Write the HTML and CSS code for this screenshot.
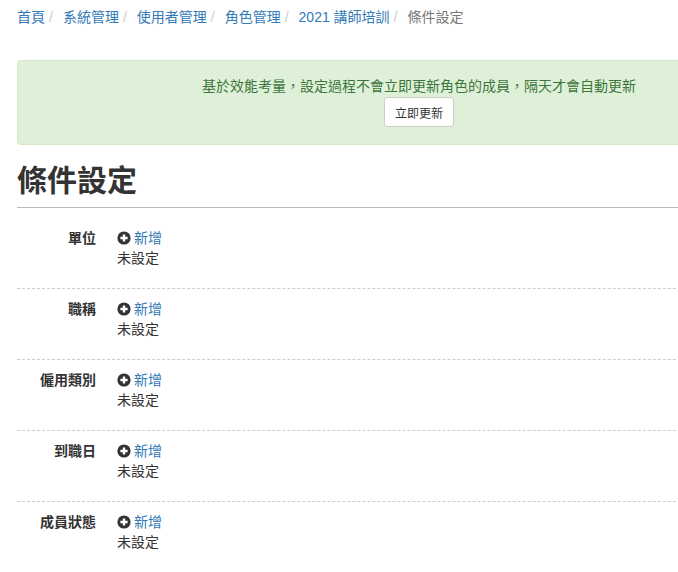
FILE: index.html
```html
<!DOCTYPE html>
<html lang="zh-Hant">
<head>
    <meta charset="UTF-8">
    <title>條件設定</title>
    <link rel="stylesheet" href="styles.css">
</head>
<body>
    <div class="page">
        <ol class="breadcrumb">
            <li><a href="#">首頁</a></li>
            <li><a href="#">系統管理</a></li>
            <li><a href="#">使用者管理</a></li>
            <li><a href="#">角色管理</a></li>
            <li><a href="#">2021 講師培訓</a></li>
            <li class="active">條件設定</li>
        </ol>

        <div class="alert-success">
            <p>基於效能考量，設定過程不會立即更新角色的成員，隔天才會自動更新</p>
            <button type="button" class="btn-sm">立即更新</button>
        </div>

        <h1 class="page-header">條件設定</h1>

        <div class="cond-row">
            <div class="cond-label">單位</div>
            <div class="cond-value">
                <a href="#" class="add-link"><svg width="14" height="14" viewBox="0 0 14 14"><circle cx="7" cy="7" r="6.6" fill="#333"/><path d="M7 3.4v7.2M3.4 7h7.2" stroke="#fff" stroke-width="2.4"/></svg>新增</a>
                <div>未設定</div>
            </div>
        </div>
        <div class="cond-row">
            <div class="cond-label">職稱</div>
            <div class="cond-value">
                <a href="#" class="add-link"><svg width="14" height="14" viewBox="0 0 14 14"><circle cx="7" cy="7" r="6.6" fill="#333"/><path d="M7 3.4v7.2M3.4 7h7.2" stroke="#fff" stroke-width="2.4"/></svg>新增</a>
                <div>未設定</div>
            </div>
        </div>
        <div class="cond-row">
            <div class="cond-label">僱用類別</div>
            <div class="cond-value">
                <a href="#" class="add-link"><svg width="14" height="14" viewBox="0 0 14 14"><circle cx="7" cy="7" r="6.6" fill="#333"/><path d="M7 3.4v7.2M3.4 7h7.2" stroke="#fff" stroke-width="2.4"/></svg>新增</a>
                <div>未設定</div>
            </div>
        </div>
        <div class="cond-row">
            <div class="cond-label">到職日</div>
            <div class="cond-value">
                <a href="#" class="add-link"><svg width="14" height="14" viewBox="0 0 14 14"><circle cx="7" cy="7" r="6.6" fill="#333"/><path d="M7 3.4v7.2M3.4 7h7.2" stroke="#fff" stroke-width="2.4"/></svg>新增</a>
                <div>未設定</div>
            </div>
        </div>
        <div class="cond-row">
            <div class="cond-label">成員狀態</div>
            <div class="cond-value">
                <a href="#" class="add-link"><svg width="14" height="14" viewBox="0 0 14 14"><circle cx="7" cy="7" r="6.6" fill="#333"/><path d="M7 3.4v7.2M3.4 7h7.2" stroke="#fff" stroke-width="2.4"/></svg>新增</a>
                <div>未設定</div>
            </div>
        </div>
    </div>
</body>
</html>
```

FILE: styles.css
```css
* { margin: 0; padding: 0; box-sizing: border-box; }

html, body { overflow: hidden; }

body { font-family: "Liberation Sans", "Noto Sans CJK TC", sans-serif; font-size: 14px; line-height: 20px; color: #333; background: #fff; }

a { color: #337ab7; text-decoration: none; }

.page { width: 804px; padding: 7px 0 0 17px; box-sizing: content-box; }

.breadcrumb { list-style: none; display: flex; }

.breadcrumb li + li::before { content: "/"; color: #ccc; padding: 0 10px 0 4px; }

.breadcrumb .active { color: #777; }

.alert-success { margin-top: 33px; padding: 15px 15px 17px; background: #dff0d8; border: 1px solid #d6e9c6; border-radius: 4px; color: #3c763d; text-align: center; }

.btn-sm { margin-top: 1px; height: 30px; padding: 0 10px; font-family: inherit; font-size: 12px; color: #333; background: #fff; border: 1px solid #ccc; border-radius: 3px; cursor: pointer; }

.page-header { margin-top: 19px; padding-bottom: 10px; font-size: 30px; line-height: 33px; font-weight: bold; border-bottom: 1px solid #bbb; }

.cond-row { display: grid; grid-template-columns: 79px 1fr; column-gap: 21px; padding: 20px 0 20px; border-bottom: 1px dashed #ccc; }

.cond-row + .cond-row { padding-top: 10px; }

.cond-label { text-align: right; font-weight: bold; }

.add-link { display: flex; align-items: center; gap: 3px; width: fit-content; height: 20px; }
```
